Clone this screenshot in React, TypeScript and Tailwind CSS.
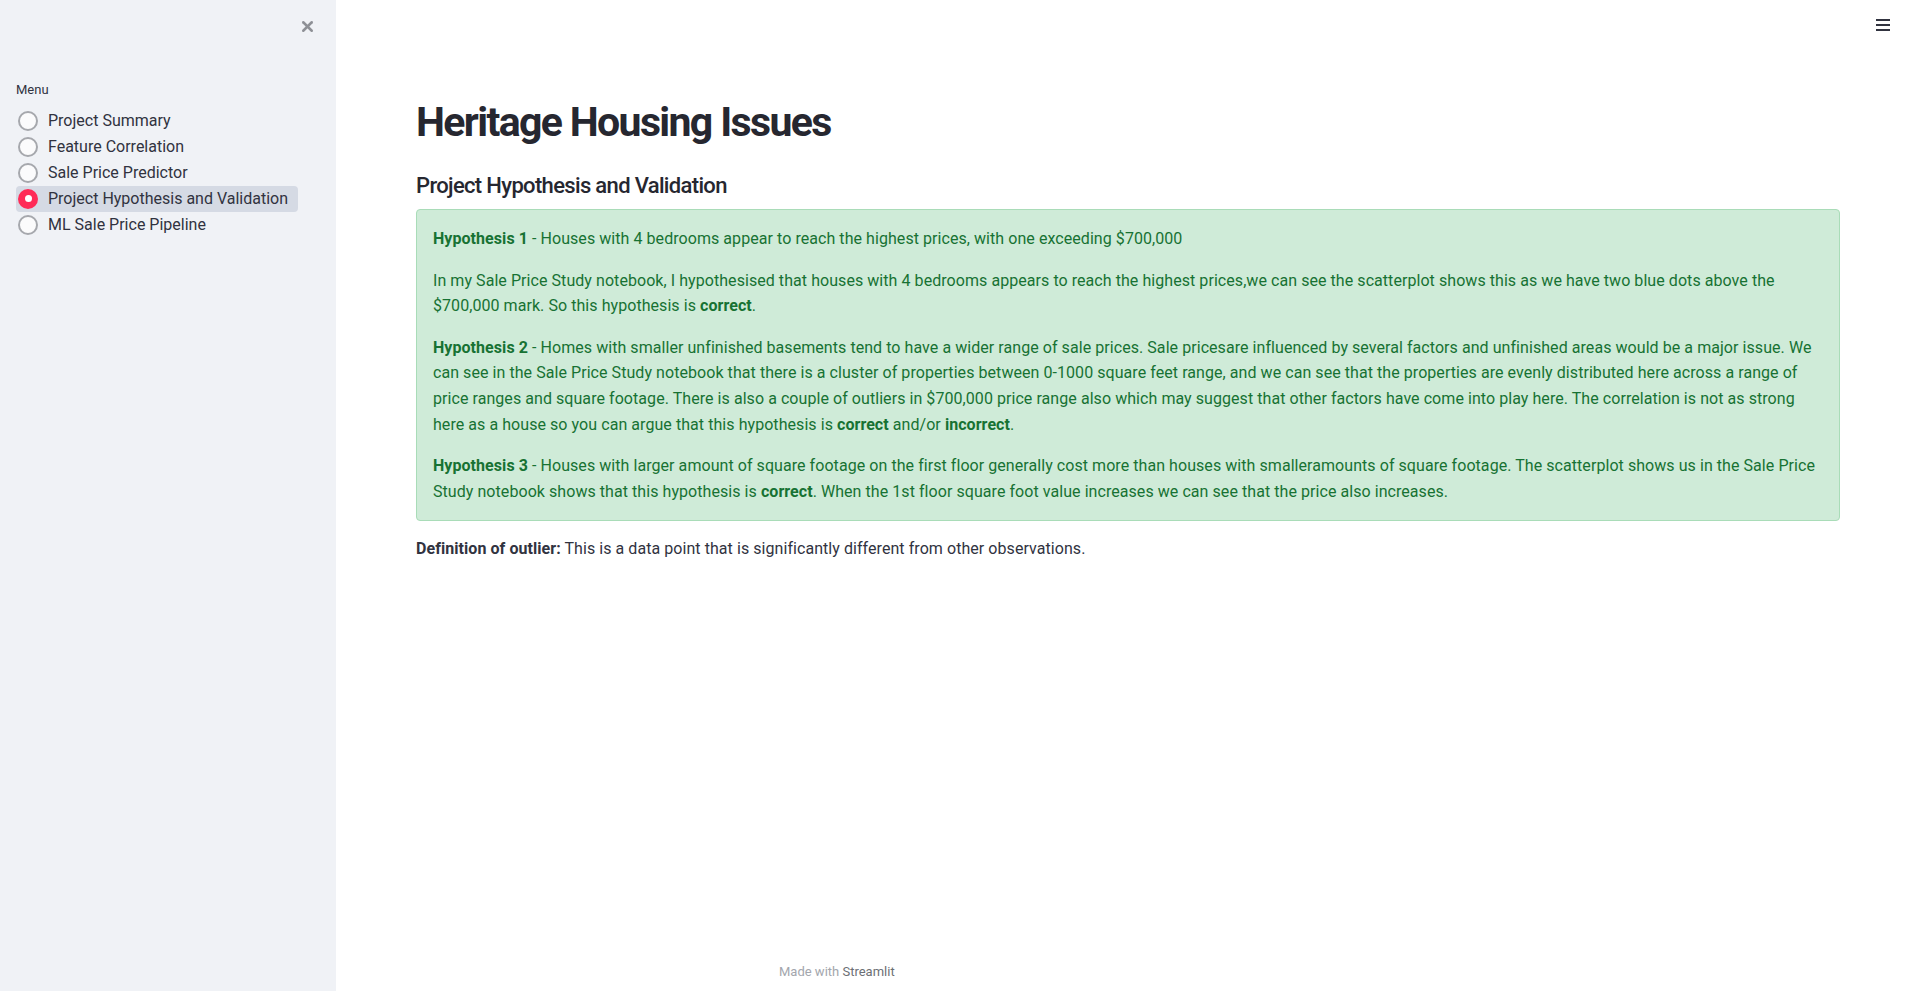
import { X } from "lucide-react";

const menuItems = [
    "Project Summary",
    "Feature Correlation",
    "Sale Price Predictor",
    "Project Hypothesis and Validation",
    "ML Sale Price Pipeline",
];

const selected = 3;

function Sidebar() {
    return (
        <aside className="flex w-[336px] shrink-0 flex-col bg-[#f0f2f6]">
            <div className="flex h-[52px] justify-end pr-[20px] pt-[18px]">
                <X className="h-[17px] w-[17px] text-[#8e9096]" strokeWidth={3.5} />
            </div>
            <div className="px-4 pt-[28px]">
                <p className="mb-[8px] text-[13px] text-[#31333f]">Menu</p>
                <div className="flex flex-col">
                    {menuItems.map((item, index) => (
                        <div
                            key={item}
                            className={
                                "flex h-[26px] w-[282px] items-center gap-[10px] rounded " +
                                (index === selected ? "bg-[#d5dae4]" : "")
                            }
                        >
                            <span
                                className={
                                    "ml-[2px] flex h-[20px] w-[20px] items-center justify-center rounded-full " +
                                    (index === selected
                                        ? "bg-[#ff2b57]"
                                        : "border-2 border-[#a6a8ad] bg-[#fbfbfc]")
                                }
                            >
                                {index === selected && <span className="h-[7px] w-[7px] rounded-full bg-white"></span>}
                            </span>
                            <span className="text-base text-[#31333f]">{item}</span>
                        </div>
                    ))}
                </div>
            </div>
        </aside>
    );
}

export default function App() {
    return (
        <div
            className="flex h-[991px] w-full overflow-hidden bg-white text-[#31333f]"
            style={{ fontFamily: "Roboto, 'Noto Sans', sans-serif" }}
        >
            <Sidebar />
            <main className="flex flex-1 flex-col">
                <div className="flex h-[52px] justify-end pr-[30px] pt-[19px]">
                    <div className="flex w-[14px] flex-col gap-[3px]">
                        <div className="h-[2px] bg-[#31333f]"></div>
                        <div className="h-[2px] bg-[#31333f]"></div>
                        <div className="h-[2px] bg-[#31333f]"></div>
                    </div>
                </div>
                <div className="flex flex-1 flex-col px-20 pt-[42px]">
                    <h1 className="text-[41px] font-bold leading-[56px] tracking-[-0.04em] text-[#262730]">
                        Heritage Housing Issues
                    </h1>
                    <h3 className="mt-[21px] text-[22px] font-medium leading-[30px] tracking-[-0.03em] text-[#262730]">
                        Project Hypothesis and Validation
                    </h3>
                    <div className="mt-[8px] flex flex-col gap-[16px] rounded border border-[#a9dcb8] bg-[#cfebd8] px-4 py-4 text-base leading-[25.6px] tracking-[0.06px] text-[#177233]">
                        <p>
                            <b>Hypothesis 1</b> - Houses with 4 bedrooms appear to reach the highest prices, with one
                            exceeding $700,000
                        </p>
                        <p>
                            In my Sale Price Study notebook, I hypothesised that houses with 4 bedrooms appears to reach
                            the highest prices,we can see the scatterplot shows this as we have two blue dots above the
                            $700,000 mark. So this hypothesis is <b>correct</b>.
                        </p>
                        <p>
                            <b>Hypothesis 2</b> - Homes with smaller unfinished basements tend to have a wider range of
                            sale prices. Sale pricesare influenced by several factors and unfinished areas would be a
                            major issue. We can see in the Sale Price Study notebook that there is a cluster of
                            properties between 0-1000 square feet range, and we can see that the properties are evenly
                            distributed here across a range of price ranges and square footage. There is also a couple
                            of outliers in $700,000 price range also which may suggest that other factors have come into
                            play here. The correlation is not as strong here as a house so you can argue that this
                            hypothesis is <b>correct</b> and/or <b>incorrect</b>.
                        </p>
                        <p>
                            <b>Hypothesis 3</b> - Houses with larger amount of square footage on the first floor
                            generally cost more than houses with smalleramounts of square footage. The scatterplot shows
                            us in the Sale Price Study notebook shows that this hypothesis is <b>correct</b>. When the
                            1st floor square foot value increases we can see that the price also increases.
                        </p>
                    </div>
                    <p className="mt-[15px] text-base leading-[25.6px] tracking-[0.06px]">
                        <b>Definition of outlier:</b> This is a data point that is significantly different from other
                        observations.
                    </p>
                </div>
                <footer className="mx-auto w-[730px] px-4 pb-[10px] text-[13px] text-[#a3a6ad]">
                    Made with <span className="text-[#6c6f75]">Streamlit</span>
                </footer>
            </main>
        </div>
    );
}
